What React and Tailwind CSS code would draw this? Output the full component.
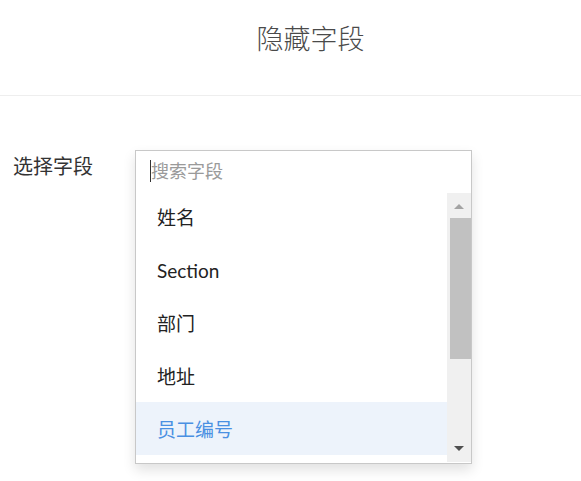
import React from 'react';

const items = ['姓名', 'Section', '部门', '地址', '员工编号'];

export default function App() {
    return (
        <div
            className="w-full h-[481px] bg-white overflow-hidden"
            style={{ fontFamily: '"Lato", "Noto Sans CJK SC", sans-serif' }}
        >
            <div className="h-[96px] border-b border-[#eeeeee] flex justify-center pl-[40px] pt-[21px]">
                <h1 className="text-[27px] leading-[36px] text-[#4a4a4a] font-light">隐藏字段</h1>
            </div>

            <div className="flex pt-[54px]">
                <label className="w-[135px] pl-[13px] pt-[3px] text-[20px] leading-[26px] text-[#333]">
                    选择字段
                </label>

                <div className="w-[337px] h-[314px] border border-[#c8c8c8] bg-white shadow-[0_6px_12px_rgba(0,0,0,0.12)] flex flex-col">
                    <div className="h-[39px] flex items-center pl-[14px]">
                        <span className="w-px h-[22px] bg-[#333]" />
                        <span className="text-[18px] text-[#9a9a9a] leading-none">搜索字段</span>
                    </div>

                    <div className="flex flex-1">
                        <ul className="flex-1">
                            {items.map((item, i) => (
                                <li
                                    key={item}
                                    className={
                                        i === 4
                                            ? 'h-[53px] flex items-center pl-[21px] pt-[4px] text-[19px] bg-[#edf3fb] text-[#4a90e2]'
                                            : 'h-[53px] flex items-center pl-[21px] pt-[4px] text-[19px] text-[#222]'
                                    }
                                >
                                    {item}
                                </li>
                            ))}
                        </ul>

                        <div className="w-[24px] mt-[3px] mb-[1px] bg-[#f0f0f0] flex flex-col items-center">
                            <svg width="12" height="8" viewBox="0 0 12 8" className="mt-[9px]">
                                <path d="M1 7 L6 2 L11 7 Z" fill="#a3a3a3" />
                            </svg>
                            <div className="w-[21px] ml-[2px] h-[141px] mt-[8px] bg-[#c1c1c1]" />
                            <div className="flex-1" />
                            <svg width="12" height="8" viewBox="0 0 12 8" className="mb-[9px]">
                                <path d="M1 1 L11 1 L6 6 Z" fill="#505050" />
                            </svg>
                        </div>
                    </div>
                </div>
            </div>
        </div>
    );
}
